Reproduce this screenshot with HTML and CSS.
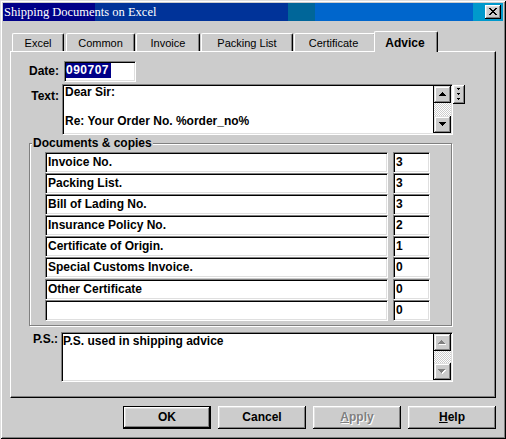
FILE: index.html
```html
<!DOCTYPE html>
<html>
<head>
<meta charset="utf-8">
<title>Shipping Documents on Excel</title>
<link rel="stylesheet" href="styles.css">
</head>
<body>
<div class="window">
  <div class="titlebar">
    <span class="title">Shipping Documents on Excel</span>
    <span class="close">
      <svg width="8" height="7" viewBox="0 0 8 7" shape-rendering="crispEdges">
        <path fill="#000" d="M0 0h2v1h-2zM6 0h2v1h-2zM1 1h2v1h-2zM5 1h2v1h-2zM2 2h4v1h-4zM3 3h2v1h-2zM2 4h4v1h-4zM1 5h2v1h-2zM5 5h2v1h-2zM0 6h2v1h-2zM6 6h2v1h-2z"/>
      </svg>
    </span>
  </div>

  <div class="tabs">
    <div class="tab t-excel">Excel</div>
    <div class="tab t-common">Common</div>
    <div class="tab t-invoice">Invoice</div>
    <div class="tab t-packing">Packing List</div>
    <div class="tab t-cert">Certificate</div>
    <div class="tab active t-advice">Advice</div>
  </div>

  <div class="panel">
    <div class="row row-date">
      <div class="label l-date">Date:</div>
      <div class="field date-field"><span class="sel">090707</span></div>
    </div>

    <div class="row row-text">
      <div class="label l-text">Text:</div>
      <div class="field memo memo-text">
        <div class="memo-content">
          <div class="memo-lines lines-text">Dear Sir:<br><br>Re: Your Order No. %order_no%</div>
        </div>
        <div class="vscroll">
          <div class="sbtn"><svg width="7" height="4" viewBox="0 0 7 4" shape-rendering="crispEdges"><path fill="#000" d="M3 0h1v1h1v1h1v1h1v1h-7v-1h1v-1h1v-1h1z"/></svg></div>
          <div class="track track-text"></div>
          <div class="sbtn"><svg width="7" height="4" viewBox="0 0 7 4" shape-rendering="crispEdges"><path fill="#000" d="M0 0h7v1h-1v1h-1v1h-1v1h-1v-1h-1v-1h-1v-1h-1z"/></svg></div>
        </div>
      </div>
      <div class="mini-btn">
        <svg width="3" height="12" viewBox="0 0 3 12" shape-rendering="crispEdges">
          <path fill="#000" d="M0 0h3v1h-1v1h-1v-1h-1zM0 5h3v1h-1v1h-1v-1h-1zM0 10h3v1h-1v1h-1v-1h-1z"/>
        </svg>
      </div>
    </div>

    <div class="group">
      <span class="legend">Documents &amp; copies</span>
      <div class="doc-row"><div class="field dname">Invoice No.</div><div class="field dcount">3</div></div>
      <div class="doc-row"><div class="field dname">Packing List.</div><div class="field dcount">3</div></div>
      <div class="doc-row"><div class="field dname">Bill of Lading No.</div><div class="field dcount">3</div></div>
      <div class="doc-row"><div class="field dname">Insurance Policy No.</div><div class="field dcount">2</div></div>
      <div class="doc-row"><div class="field dname">Certificate of Origin.</div><div class="field dcount">1</div></div>
      <div class="doc-row"><div class="field dname">Special Customs Invoice.</div><div class="field dcount">0</div></div>
      <div class="doc-row doc-row-gap"><div class="field dname">Other Certificate</div><div class="field dcount">0</div></div>
      <div class="doc-row"><div class="field dname"></div><div class="field dcount">0</div></div>
    </div>

    <div class="row row-ps">
      <div class="label l-ps">P.S.:</div>
      <div class="field memo memo-ps">
        <div class="memo-content">
          <div class="memo-lines lines-ps">P.S. used in shipping advice</div>
        </div>
        <div class="vscroll">
          <div class="sbtn"><svg width="8" height="5" viewBox="0 0 8 5" shape-rendering="crispEdges"><path fill="#fff" d="M4 1h1v1h1v1h1v1h1v1h-7v-1h1v-1h1v-1h1z"/><path fill="#808080" d="M3 0h1v1h1v1h1v1h1v1h-7v-1h1v-1h1v-1h1z"/></svg></div>
          <div class="track track-ps"></div>
          <div class="sbtn"><svg width="8" height="5" viewBox="0 0 8 5" shape-rendering="crispEdges"><path fill="#fff" d="M1 1h7v1h-1v1h-1v1h-1v1h-1v-1h-1v-1h-1v-1h-1z"/><path fill="#808080" d="M0 0h7v1h-1v1h-1v1h-1v1h-1v-1h-1v-1h-1v-1h-1z"/></svg></div>
        </div>
      </div>
    </div>
  </div>

  <div class="buttons">
    <div class="btn default">OK</div>
    <div class="btn">Cancel</div>
    <div class="btn disabled"><span><u>A</u>pply</span></div>
    <div class="btn"><span><u>H</u>elp</span></div>
  </div>
</div>
</body>
</html>
```

FILE: styles.css
```css
* { box-sizing: border-box; }

html, body {
  margin: 0;
  padding: 0;
  background: #cccccc;
}

body {
  font-family: "Liberation Sans", Arial, sans-serif;
  font-size: 12px;
  font-weight: bold;
  color: #000;
}

.window {
  width: 506px;
  height: 439px;
  padding: 3px;
  background: #cccccc;
  box-shadow: inset 1px 1px 0 #dfdfdf, inset -1px -1px 0 #000,
              inset 2px 2px 0 #fff, inset -2px -2px 0 #808080;
  overflow: hidden;
}

/* Title bar */
.titlebar {
  height: 18px;
  display: flex;
  align-items: center;
  background: linear-gradient(to right,
    #000088 0, #000088 92px,
    #003399 92px, #003399 285px,
    #006699 285px, #006699 312px,
    #0066cc 312px, #0066cc 470px,
    #0099cc 470px);
}

.title {
  font-family: "Liberation Serif", "Times New Roman", serif;
  font-weight: normal;
  font-size: 12.5px;
  line-height: 18px;
  color: #fff;
  padding-left: 1px;
  white-space: nowrap;
}

.close {
  margin-left: auto;
  margin-right: 2px;
  width: 16px;
  height: 14px;
  background: #cccccc;
  box-shadow: inset -1px -1px 0 #000, inset 1px 1px 0 #fff,
              inset -2px -2px 0 #808080, inset 2px 2px 0 #dfdfdf;
  display: flex;
  padding: 3px 0 0 4px;
}
.close svg { display: block; }

/* Tabs */
.tabs {
  margin-top: 10px;
  height: 20px;
  padding-left: 9px;
  display: flex;
  align-items: flex-end;
}

.tab {
  height: 18px;
  border-left: 1px solid #fff;
  border-top: 1px solid #fff;
  border-right: 1px solid #000;
  border-radius: 2px 2px 0 0;
  box-shadow: inset -1px 0 0 #808080;
  background: #cccccc;
  font-weight: normal;
  font-size: 11px;
  line-height: 14px;
  padding-top: 2px;
  text-align: center;
  white-space: nowrap;
  flex: none;
}

.t-excel { width: 52px; margin-right: 2px; }
.t-common { width: 69px; margin-right: 1px; }
.t-invoice { width: 64px; margin-right: 1px; }
.t-packing { width: 92px; margin-right: 1px; }
.t-cert { width: 82px; padding-right: 3px; }

.tab.active {
  position: relative;
  z-index: 1;
  height: 21px;
  margin-bottom: -1px;
  margin-left: -2px;
  width: 64px;
  font-weight: bold;
  font-size: 12px;
  padding-top: 3.5px;
  padding-right: 2px;
}

/* Panel */
.panel {
  margin: 0 7px;
  height: 347px;
  padding-top: 9px;
  border-left: 1px solid #fff;
  border-top: 1px solid #fff;
  border-right: 1px solid #000;
  border-bottom: 1px solid #000;
  box-shadow: inset -1px -1px 0 #808080;
}

.row {
  display: flex;
  align-items: flex-start;
}

.label {
  flex: none;
  text-align: right;
  white-space: nowrap;
}

.l-date { width: 48px; line-height: 21px; margin-right: 5px; }
.l-text { width: 48px; line-height: 14px; padding-top: 5px; margin-right: 3px; }
.l-ps { width: 47px; line-height: 14px; padding-top: 0; margin-right: 3px; }

.field {
  background: #fff;
  border: 1px solid;
  border-color: #808080 #fff #fff #808080;
  padding: 1px;
  box-shadow: inset 1px 1px 0 #000, inset -1px -1px 0 #dfdfdf;
  flex: none;
  white-space: nowrap;
}

.date-field {
  width: 72px;
  height: 21px;
}

.sel {
  display: inline-block;
  vertical-align: top;
  background: #000088;
  color: #fff;
  height: 15px;
  line-height: 15px;
  letter-spacing: 0.5px;
  padding-right: 2px;
}

.row-text { margin-top: 2px; }

.memo {
  display: flex;
}

.memo-text { width: 391px; height: 51px; }
.memo-ps { width: 392px; height: 50px; }

.memo-content {
  flex: 1;
  min-width: 0;
}

.memo-lines { white-space: nowrap; }
.lines-text { line-height: 14.5px; margin-top: -1px; padding-left: 1px; }
.lines-ps { line-height: 14px; padding-left: 0; }

.vscroll {
  width: 18px;
  flex: none;
  border-left: 1px solid #000;
  display: flex;
  flex-direction: column;
}

.sbtn {
  height: 17px;
  flex: none;
  background: #cccccc;
  box-shadow: inset -1px -1px 0 #000, inset 1px 1px 0 #dfdfdf,
              inset -2px -2px 0 #808080, inset 2px 2px 0 #fff;
  display: flex;
  align-items: center;
  justify-content: center;
  padding: 0 1px 1px 0;
}
.sbtn svg { display: block; }

.track {
  flex: 1;
  background-color: #fff;
  background-image: conic-gradient(#cccccc 25%, #fff 0 50%, #cccccc 0 75%, #fff 0);
  background-size: 2px 2px;
}

.mini-btn {
  flex: none;
  width: 12px;
  height: 19px;
  margin-top: 1px;
  background: #cccccc;
  box-shadow: inset -1px -1px 0 #000, inset 1px 1px 0 #fff,
              inset -2px -2px 0 #808080, inset 2px 2px 0 #dfdfdf;
  padding: 3px 0 0 4px;
}
.mini-btn svg { display: block; }

/* Group box */
.group {
  position: relative;
  margin-top: 8px;
  margin-left: 18px;
  width: 423px;
  height: 183px;
  border: 1px solid #808080;
  box-shadow: inset 1px 1px 0 #fff, 1px 1px 0 #fff;
  padding: 8px 0 0 15px;
}

.legend {
  position: absolute;
  top: -8px;
  left: 2px;
  padding: 0 1px;
  background: #cccccc;
  line-height: 14px;
  white-space: nowrap;
}

.doc-row {
  display: flex;
  height: 21px;
}
.doc-row-gap { margin-top: 1px; }

.dname {
  width: 343px;
  height: 21px;
  line-height: 17px;
  padding-left: 2px;
}

.dcount {
  width: 37px;
  height: 21px;
  margin-left: 5px;
  line-height: 17px;
  padding-left: 2px;
}

.row-ps { margin-top: 6px; }

/* Buttons */
.buttons {
  margin-top: 8px;
  padding-right: 7px;
  display: flex;
  justify-content: flex-end;
  gap: 7px;
}

.btn {
  width: 88px;
  height: 23px;
  background: #cccccc;
  box-shadow: inset -1px -1px 0 #000, inset 1px 1px 0 #fff,
              inset -2px -2px 0 #808080, inset 2px 2px 0 #dfdfdf;
  display: flex;
  align-items: center;
  justify-content: center;
  line-height: 19px;
  padding-bottom: 1px;
}

.btn.default {
  border: 1px solid #000;
}

.btn.disabled {
  color: #808080;
  text-shadow: 1px 1px 0 #fff;
}

.btn u {
  text-decoration: underline;
  text-underline-offset: 1px;
}
```
